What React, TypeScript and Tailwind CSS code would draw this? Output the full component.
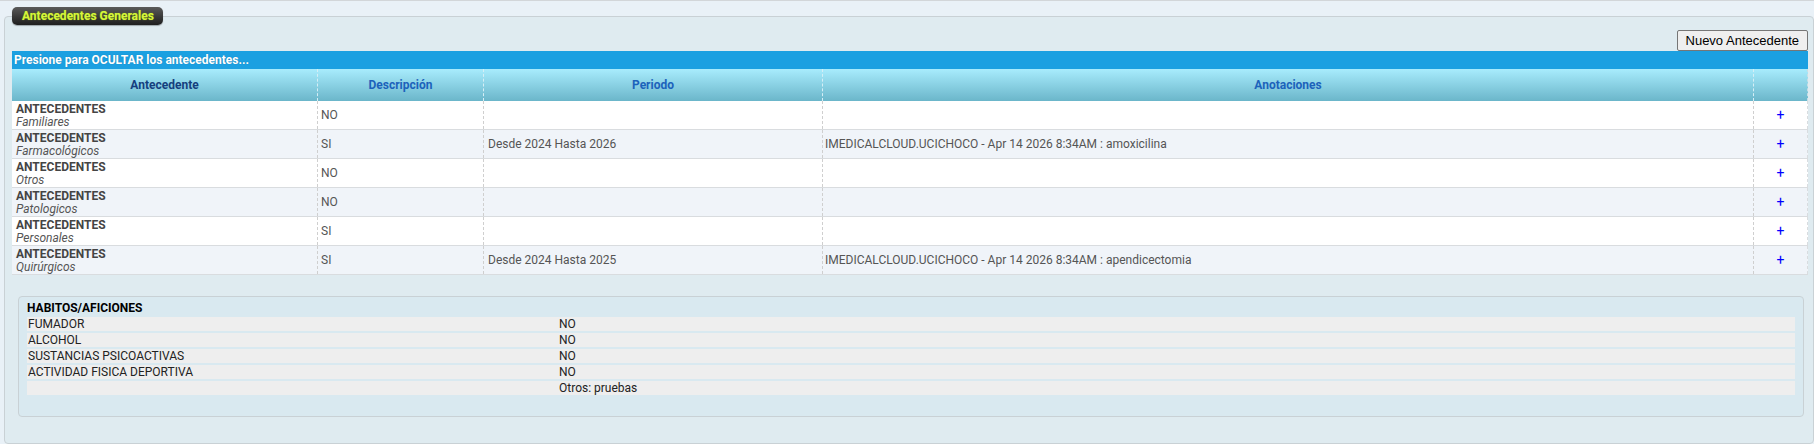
import React from "react";

type Antecedente = {
    tipo: string;
    desc: string;
    periodo?: string;
    nota?: string;
};

const antecedentes: Antecedente[] = [
    { tipo: "Familiares", desc: "NO" },
    {
        tipo: "Farmacológicos",
        desc: "SI",
        periodo: "Desde 2024 Hasta 2026",
        nota: "IMEDICALCLOUD.UCICHOCO - Apr 14 2026 8:34AM : amoxicilina",
    },
    { tipo: "Otros", desc: "NO" },
    { tipo: "Patologicos", desc: "NO" },
    { tipo: "Personales", desc: "SI" },
    {
        tipo: "Quirúrgicos",
        desc: "SI",
        periodo: "Desde 2024 Hasta 2025",
        nota: "IMEDICALCLOUD.UCICHOCO - Apr 14 2026 8:34AM : apendicectomia",
    },
];

const habitos = [
    { label: "FUMADOR", value: "NO" },
    { label: "ALCOHOL", value: "NO" },
    { label: "SUSTANCIAS PSICOACTIVAS", value: "NO" },
    { label: "ACTIVIDAD FISICA DEPORTIVA", value: "NO" },
    { label: "", value: "Otros: pruebas" },
];

const cols = "grid grid-cols-[305px_166px_339px_931px_1fr]";

export default function App() {
    return (
        <div className="w-full h-[444px] overflow-hidden bg-[#e9f1f7] border-t border-[#d2d6d9] pt-[15px] pl-[4px] font-['Roboto',sans-serif] text-[12px]">
            {/* Fieldset */}
            <div className="relative h-[428px] w-[1810px] bg-[#dfebf0] border border-[#c9d1d5] rounded-[4px]">
                {/* Legend */}
                <div className="absolute left-[7px] top-[-10px] h-[18px] w-[151px] rounded-[5px] bg-gradient-to-b from-[#5a5a5a] to-[#1f1f1f] shadow-[0_1px_1px_rgba(0,0,0,0.3)] pl-[10px] flex items-center">
                    <span className="font-bold text-[12px] text-[#d4f53c] [text-shadow:0_0_1px_rgba(160,200,0,0.8)]">
                        Antecedentes Generales
                    </span>
                </div>

                {/* Botón */}
                <div className="flex justify-end pt-[13px] pr-[5px]">
                    <button className="h-[21px] px-[8px] bg-[#efefef] border border-[#767676] rounded-[2px] text-[13px] leading-none text-black font-['Liberation_Sans',sans-serif]">
                        Nuevo Antecedente
                    </button>
                </div>

                {/* Tabla */}
                <div className="ml-[7px] w-[1796px]">
                    <div className="h-[18px] bg-[#1ba0e1] pl-[2px] flex items-center text-white font-bold [text-shadow:0_0_1px_rgba(0,0,0,0.25)]">
                        Presione para OCULTAR los antecedentes...
                    </div>
                    <div className={`${cols} h-[32px] bg-gradient-to-b from-[#a8ecfd] to-[#6bb6ca] font-bold`}>
                        <div className="flex items-center justify-center text-[#153f7e]">Antecedente</div>
                        <div className="flex items-center justify-center text-[#1c62bb] border-l border-dashed border-[#d6eef5]">Descripción</div>
                        <div className="flex items-center justify-center text-[#1c62bb] border-l border-dashed border-[#d6eef5]">Periodo</div>
                        <div className="flex items-center justify-center text-[#1c62bb] border-l border-dashed border-[#d6eef5]">Anotaciones</div>
                        <div className="border-l border-dashed border-[#d6eef5] border-r border-r-[#c8dde4]"></div>
                    </div>
                    {antecedentes.map((a, i) => (
                        <div
                            key={a.tipo}
                            className={`${cols} h-[29px] border-b border-[#d9dcdf] text-[#555] ${i % 2 === 0 ? "bg-white" : "bg-[#f0f4f9]"}`}
                        >
                            <div className="pl-[4px] pr-[3px] pt-[2px] leading-[13px]">
                                <div className="font-bold text-[#444]">ANTECEDENTES</div>
                                <div className="italic text-[#555]">{a.tipo}</div>
                            </div>
                            <div className="flex items-center px-[3px] border-l border-dashed border-[#cfcfcf]">{a.desc}</div>
                            <div className="flex items-center px-[4px] border-l border-dashed border-[#cfcfcf]">{a.periodo}</div>
                            <div className="flex items-center px-[2px] border-l border-dashed border-[#cfcfcf]">{a.nota}</div>
                            <div className="flex items-center justify-center border-l border-dashed border-[#cfcfcf] border-r border-r-[#d9dcdf] text-[#0000ff] text-[14px]">
                                +
                            </div>
                        </div>
                    ))}
                </div>

                {/* Habitos */}
                <div className="mt-[21px] ml-[13px] mr-[9px] h-[121px] bg-[#d9e9f0] border border-[#c9d1d5] rounded-[4px] pt-[4px] px-[8px]">
                    <div className="h-[14px] mb-[2px] leading-[14px] font-bold text-black">HABITOS/AFICIONES</div>
                    <div className="flex flex-col gap-[2px]">
                        {habitos.map((h, i) => (
                            <div key={i} className="grid grid-cols-[532px_1fr] h-[14px] leading-[14px] bg-[#eeeeee] text-[#222]">
                                <div className="pl-[1px]">{h.label}</div>
                                <div>{h.value}</div>
                            </div>
                        ))}
                    </div>
                </div>
            </div>
        </div>
    );
}
